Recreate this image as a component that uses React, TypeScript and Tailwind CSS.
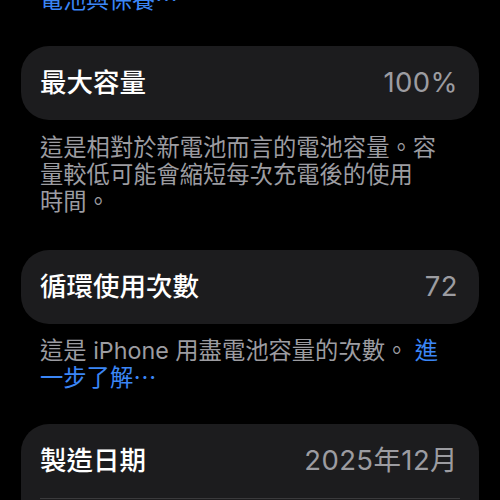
const font = "font-['Inter','Noto_Sans_CJK_TC',sans-serif]"

function Row({ label, value }: { label: string; value: string }) {
  return (
    <div className="flex h-[74px] items-center justify-between pl-[19px] pr-[21px]">
      <span className="text-[26.5px] font-medium text-white">{label}</span>
      <span className="text-[27.5px] tracking-[0.4px] text-[#9c9ca1]">{value}</span>
    </div>
  )
}

export default function App() {
  return (
    <div className={`h-[500px] w-[500px] overflow-hidden bg-black ${font}`}>
      <p className="mt-[-13px] px-[40px] text-[23px] leading-[27px] text-[#3b86f6]">
        電池與保養⋯
      </p>

      <div className="mx-[21px] mt-[32px] rounded-[28px] bg-[#1c1c1e]">
        <Row label="最大容量" value="100%" />
      </div>
      <p className="mt-[14px] mb-[35px] px-[40px] text-[23.3px] leading-[27px] text-[#9c9ca1]">
        這是相對於新電池而言的電池容量。容
        <br />
        量較低可能會縮短每次充電後的使用
        <br />
        時間。
      </p>

      <div className="mx-[21px] rounded-[28px] bg-[#1c1c1e]">
        <Row label="循環使用次數" value="72" />
      </div>
      <p className="mt-[13px] mb-[33px] px-[40px] text-[23.3px] leading-[27px] text-[#9c9ca1]">
        這是 iPhone 用盡電池容量的次數。 <span className="text-[#3b86f6]">進</span>
        <br />
        <span className="text-[#3b86f6]">一步了解⋯</span>
      </p>

      <div className="mx-[21px] rounded-[28px] bg-[#1c1c1e]">
        <Row label="製造日期" value="2025年12月" />
        <div className="mx-[19px] h-px bg-[#3a3a3c]" />
        <Row label="首次使用" value="2026年1月" />
      </div>
    </div>
  )
}
